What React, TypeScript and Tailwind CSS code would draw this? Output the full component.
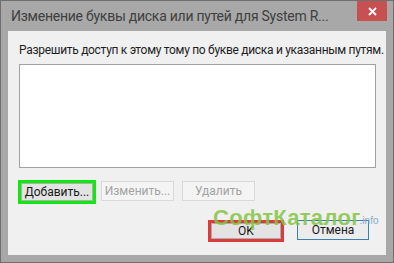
import React from 'react';

const ui = { fontFamily: 'Roboto, "Noto Sans", sans-serif' };

const Btn: React.FC<{ label: string; disabled?: boolean; className?: string }> = ({ label, disabled, className }) => (
    <div
        className={`flex items-center justify-center text-[12px] leading-none ${
            disabled
                ? 'bg-[#f4f4f4] border border-[#d9d9d9] text-[#a3a3a3]'
                : 'bg-[#e3e3e3] border border-[#adadad] text-[#1a1a1a]'
        } ${className ?? ''}`}
    >
        {label}
    </div>
);

export default function App() {
    return (
        <div className="relative w-[394px] h-[263px] bg-[#a8a8a8] border border-[#6f6f6f] overflow-hidden" style={ui}>
            {/* Title bar */}
            <div className="flex h-[30px] items-start justify-between">
                <div className="pl-[10px] pt-[6px] text-[14px] leading-[18px] text-[#3f3f3f] tracking-[-0.25px] whitespace-nowrap">
                    Изменение буквы диска или путей для System R...
                </div>
                <div className="mr-[6px] w-[30px] h-[20px] bg-[#c75050] flex items-center justify-center">
                    <svg width="9" height="9" viewBox="0 0 9 9">
                        <path d="M1 1 L8 8 M8 1 L1 8" stroke="#fff" strokeWidth="1.8" />
                    </svg>
                </div>
            </div>

            {/* Client area */}
            <div className="mx-[7px] h-[224px] bg-[#f0f0f0] px-[11px] pt-[11px] flex flex-col">
                <div className="text-[12px] leading-[16px] text-[#1e1e1e] tracking-[-0.3px] whitespace-nowrap">
                    Разрешить доступ к этому тому по букве диска и указанным путям.
                </div>
                <div className="mt-[6px] h-[104px] w-[357px] bg-white border border-[#a0a0a0]" />

                <div className="mt-[13px] flex items-center">
                    <div className="outline-3 outline-[#11e811] ml-[2px] mt-[2px]">
                        <Btn label="Добавить..." className="w-[72px] h-[18px]" />
                    </div>
                    <Btn label="Изменить..." disabled className="ml-[8px] w-[73px] h-[20px]" />
                    <Btn label="Удалить" disabled className="ml-[8px] w-[73px] h-[20px]" />
                </div>

                <div className="mt-[19px] flex items-center">
                    <div className="ml-[192px] outline-3 outline-[#dc3b3b] mt-[1px]">
                        <Btn label="OK" className="w-[70px] h-[16px]" />
                    </div>
                    <Btn label="Отмена" className="ml-[16px] w-[72px] h-[20px] !bg-[#ececec] !border-[#3c7fb1]" />
                </div>
            </div>

            {/* Watermark overlay */}
            <div className="absolute left-[212px] top-[206px] flex items-end pointer-events-none">
                <span
                    className="text-[22px] font-bold leading-none text-[#84c444]/85 tracking-[0.3px]"
                    style={{ fontFamily: '"Liberation Sans", Arial, sans-serif' }}
                >
                    СофтКаталог
                </span>
                <span className="text-[10px] leading-none mb-[3px] -ml-[1px] text-[#8fa9c6]" style={{ fontFamily: '"Liberation Sans", Arial, sans-serif' }}>
                    .info
                </span>
            </div>
        </div>
    );
}
